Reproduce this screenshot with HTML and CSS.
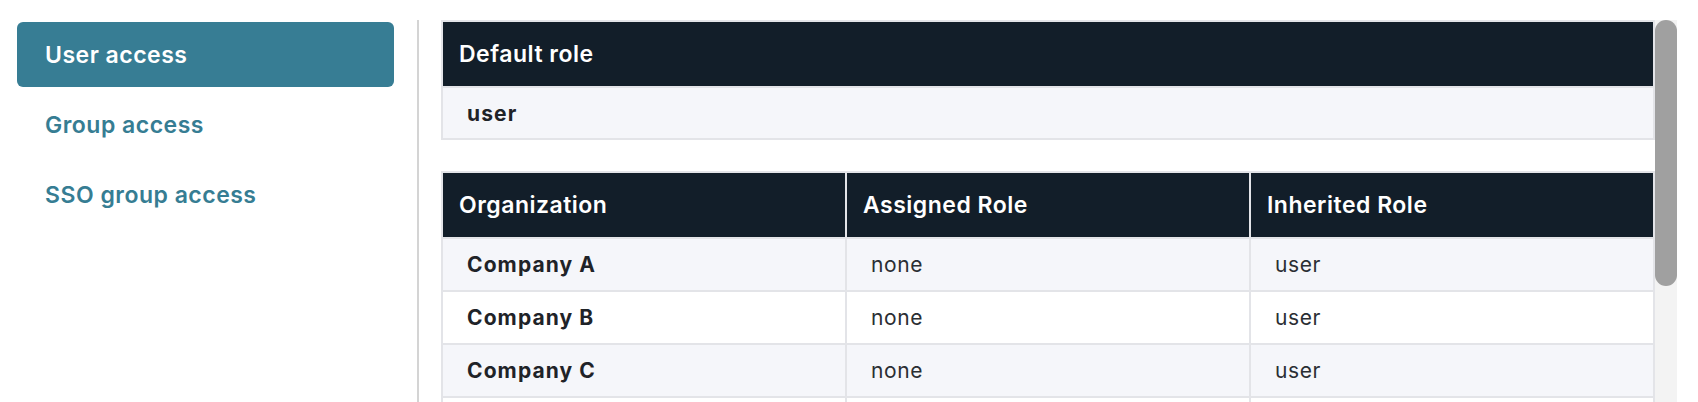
FILE: index.html
```html
<!DOCTYPE html>
<html lang="en">
<head>
<meta charset="utf-8">
<title>Access</title>
<link rel="stylesheet" href="styles.css">
</head>
<body>
<div class="layout">
  <nav class="sidebar">
    <a class="nav-item active" href="#">User access</a>
    <a class="nav-item" href="#">Group access</a>
    <a class="nav-item" href="#">SSO group access</a>
  </nav>
  <div class="divider"></div>
  <main class="content">
    <div class="tables">
      <table class="grid default-role">
        <thead>
          <tr><th>Default role</th></tr>
        </thead>
        <tbody>
          <tr><td class="name">user</td></tr>
        </tbody>
      </table>
      <table class="grid orgs">
        <thead>
          <tr><th>Organization</th><th>Assigned Role</th><th>Inherited Role</th></tr>
        </thead>
        <tbody>
          <tr><td class="name">Company A</td><td>none</td><td>user</td></tr>
          <tr><td class="name">Company B</td><td>none</td><td>user</td></tr>
          <tr><td class="name">Company C</td><td>none</td><td>user</td></tr>
          <tr><td class="name">Company D</td><td>none</td><td>user</td></tr>
        </tbody>
      </table>
    </div>
    <div class="scrollbar"><div class="thumb"></div></div>
  </main>
</div>
</body>
</html>
```
FILE: styles.css
```css
* { box-sizing: border-box; }
html, body { margin: 0; padding: 0; background: #fff; }
body {
  font-family: Inter, "Open Sans", "Liberation Sans", sans-serif;
  color: #24282d;
  height: 402px;
  overflow: hidden;
}
.layout {
  display: flex;
  padding-top: 20px;
  height: 402px;
}
.sidebar {
  width: 417px;
  flex-shrink: 0;
  padding: 2px 23px 0 17px;
  display: flex;
  flex-direction: column;
  gap: 5px;
}
.nav-item {
  display: flex;
  align-items: center;
  height: 65px;
  padding-left: 28px;
  border-radius: 6px;
  font-size: 23px;
  font-weight: 600;
  letter-spacing: 0.5px;
  color: #367d93;
  text-decoration: none;
}
.nav-item.active {
  background: #377d94;
  color: #fff;
}
.divider {
  width: 2px;
  flex-shrink: 0;
  background: #d4d4d4;
}
.content {
  flex: 1;
  display: flex;
  margin-right: 21px;
  padding-left: 22px;
  height: 382px;
  overflow: hidden;
}
.tables {
  flex: 1;
  min-width: 0;
}
.scrollbar {
  width: 22px;
  flex-shrink: 0;
  background: #f3f3f3;
}
.thumb {
  height: 266px;
  background: #a0a0a0;
  border-radius: 11px;
}
.grid {
  width: 100%;
  border-collapse: collapse;
  table-layout: fixed;
  border: 2px solid #e3e4e8;
}
.grid th {
  background: #121e29;
  color: #fff;
  text-align: left;
  font-size: 23px;
  font-weight: 600;
  letter-spacing: 0.5px;
  height: 66px;
  padding: 0 16px;
  border: 2px solid #e3e4e8;
}
.grid td {
  height: 53px;
  padding: 0 24px;
  font-size: 21px;
  letter-spacing: 0.6px;
  border: 2px solid #e3e4e8;
  color: #2a2e33;
}
.grid tbody tr:nth-child(odd) td { background: #f5f6fa; }
.grid tbody tr:nth-child(even) td { background: #fff; }
.grid td.name { font-weight: 700; letter-spacing: 1.1px; color: #1f2328; }
.default-role { margin-bottom: 31px; }
.default-role td { height: 52px; }
```
